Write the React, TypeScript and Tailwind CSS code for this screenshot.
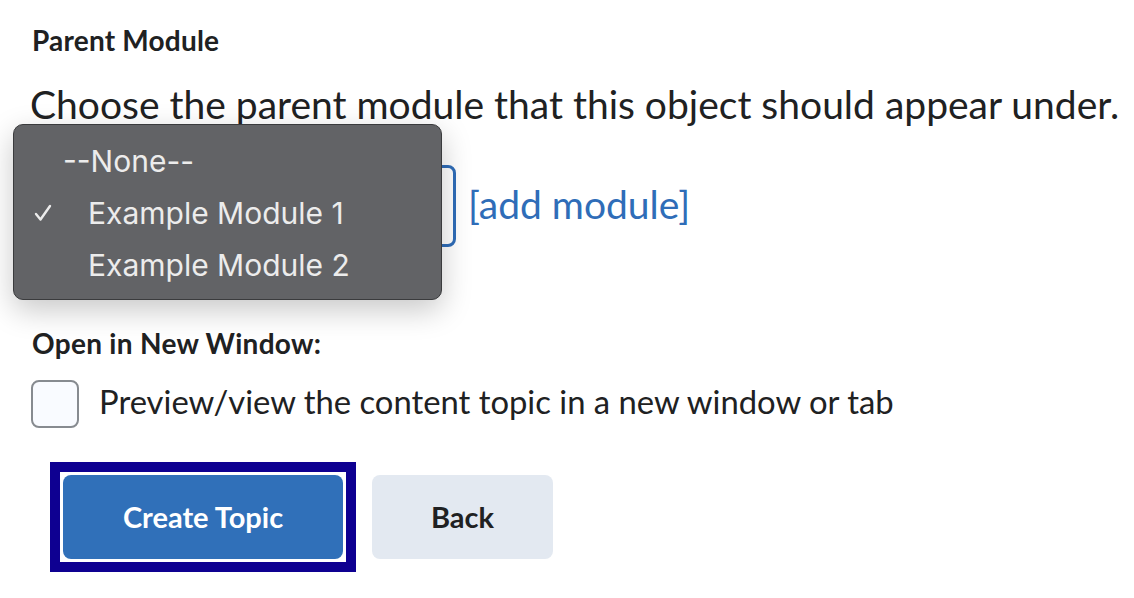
import React from "react";

export default function App() {
  return (
    <div className="relative w-[1134px] h-[598px] overflow-hidden bg-white font-['Lato',sans-serif] text-[#202122] pl-[32px] pt-[25px]">
      <h2 className="text-[28px] font-bold leading-[30px] tracking-[0.2px]">Parent Module</h2>
      <p className="mt-[27px] text-[39px] leading-[44px] whitespace-nowrap -ml-[2px]">
        Choose the parent module that this object should appear under.
      </p>
      <div className="mt-[39px] flex items-center gap-[12px]">
        <div className="w-[424px] h-[82px] border-[3px] border-[#2f6db8] rounded-[8px] bg-white" />
        <a className="text-[39px] leading-[44px] text-[#2f6db8] -mt-[4px]">[add module]</a>
      </div>
      <h3 className="mt-[81px] text-[28px] font-bold leading-[30px] tracking-[0.3px]">Open in New Window:</h3>
      <label className="mt-[22px] flex items-center gap-[20px] -ml-[1px]">
        <span className="w-[48px] h-[48px] rounded-[8px] border-2 border-[#878b90] bg-[#f9fbff]" />
        <span className="text-[32.8px] leading-[40px] whitespace-nowrap -mt-[4px]">Preview/view the content topic in a new window or tab</span>
      </label>
      <div className="mt-[34px] ml-[18px] flex items-center gap-[16px]">
        <div className="border-[10px] border-[#0e0091] p-[3px] bg-white">
          <button className="w-[280px] h-[84px] rounded-[8px] bg-[#3070b9] text-white text-[29px] font-bold">
            Create Topic
          </button>
        </div>
        <button className="w-[181px] h-[84px] rounded-[8px] bg-[#e3e9f1] text-[#202122] text-[29px] font-bold">
          Back
        </button>
      </div>

      <div className="absolute left-[13px] top-[124px] w-[429px] h-[176px] rounded-[10px] bg-[#626366] border border-[#3a3b3d] shadow-[0_10px_30px_rgba(0,0,0,0.22)] pt-[10px] font-['Inter',sans-serif] text-[#ececec] text-[30px]">
        <div className="h-[52px] flex items-center pl-[49px]">--None--</div>
        <div className="h-[52px] flex items-center relative pl-[74px]">
          <svg className="absolute left-[20px] top-[17px]" width="18" height="18" viewBox="0 0 18 18" fill="none">
            <path d="M2 10 L6.5 15.5 L16 2" stroke="#ececec" strokeWidth="2.4" strokeLinecap="round" strokeLinejoin="round" />
          </svg>
          Example Module 1
        </div>
        <div className="h-[52px] flex items-center pl-[74px]">Example Module 2</div>
      </div>
    </div>
  );
}
